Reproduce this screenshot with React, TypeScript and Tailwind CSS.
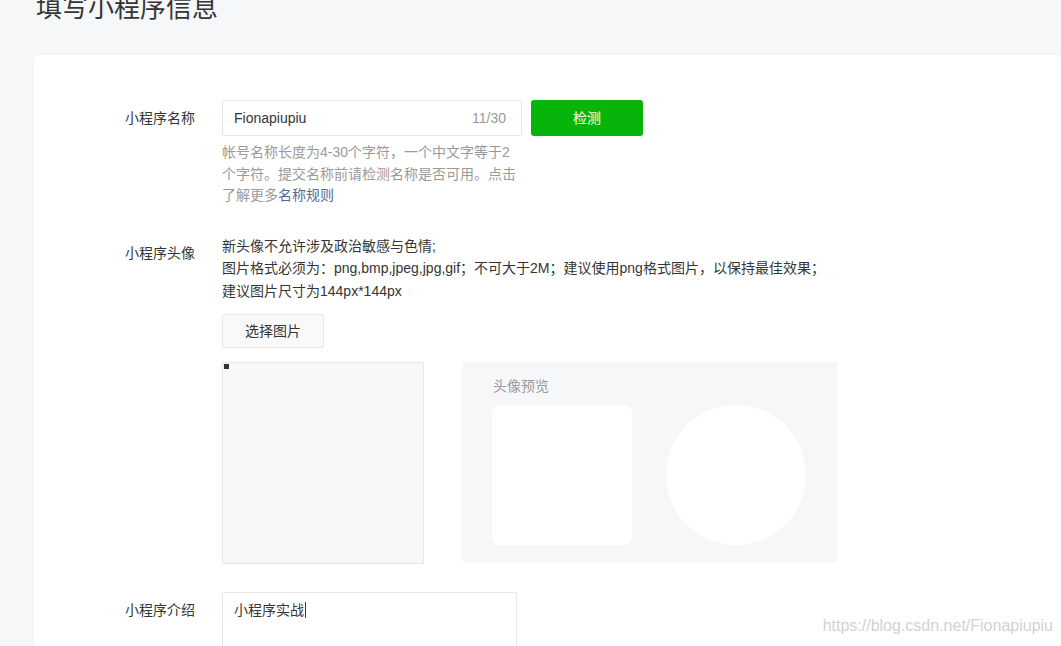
import React from 'react';

const font = { fontFamily: '"Liberation Sans", "Noto Sans CJK SC", sans-serif' };

const Label: React.FC<{ text: string }> = ({ text }) => (
  <div className="w-[97px] shrink-0 text-[14px] leading-[36px] text-[#353535]">{text}</div>
);

const App: React.FC = () => {
  return (
    <div
      className="relative h-[646px] w-[1061px] overflow-hidden bg-[#f6f7f9] antialiased"
      style={font}
    >
      <h1 className="-mt-[5px] ml-[36px] h-[60px] text-[26px] font-normal leading-[26px] text-[#353535]">
        填写小程序信息
      </h1>

      <div className="ml-[34px] h-[620px] rounded-[4px] bg-white pl-[91px] pt-[45px] shadow-[0_0_3px_rgba(0,0,0,0.06)]">
        {/* name */}
        <div className="mb-[28px] flex">
          <Label text="小程序名称" />
          <div>
            <div className="flex gap-[9px]">
              <div className="flex h-[36px] w-[300px] items-center justify-between rounded-[2px] border border-[#e7e7eb] pl-[11px] pr-[15px] text-[14px]">
                <span className="text-[#353535]">Fionapiupiu</span>
                <span className="text-[#9a9a9a]">11/30</span>
              </div>
              <button className="h-[36px] w-[112px] rounded-[3px] bg-[#07b50a] text-[14px] text-white">
                检测
              </button>
            </div>
            <p className="mt-[6px] w-[300px] text-[14px] leading-[21.5px] text-[#9a9a9a]">
              帐号名称长度为4-30个字符，一个中文字等于2个字符。提交名称前请检测名称是否可用。点击了解更多
              <a className="text-[#576b95]" href="#">名称规则</a>
            </p>
          </div>
        </div>

        {/* avatar */}
        <div className="mb-[28px] flex">
          <Label text="小程序头像" />
          <div>
            <div className="text-[14px] leading-[22.5px] text-[#353535]">
              <p>新头像不允许涉及政治敏感与色情;</p>
              <p>图片格式必须为：png,bmp,jpeg,jpg,gif；不可大于2M；建议使用png格式图片，以保持最佳效果；</p>
              <p>建议图片尺寸为144px*144px</p>
            </div>
            <button className="mt-[12px] h-[34px] w-[102px] rounded-[2px] border border-[#e7e7eb] bg-[#f9f9f9] text-[14px] text-[#353535]">
              选择图片
            </button>
            <div className="mt-[14px] flex items-start">
              <div className="h-[202px] w-[202px] border border-[#e4e6ea] bg-[#f6f7f9] p-px">
                <div className="h-[5px] w-[5px] bg-[#333]" />
              </div>
              <div className="ml-[38px] h-[200px] w-[375px] bg-[#f6f7f9] pl-[30px] pt-[14px]">
                <div className="mb-[9px] pl-px text-[14px] leading-[20px] text-[#9a9a9a]">头像预览</div>
                <div className="flex gap-[34px]">
                  <div className="h-[140px] w-[140px] rounded-[8px] bg-white" />
                  <div className="h-[140px] w-[140px] rounded-full bg-white" />
                </div>
              </div>
            </div>
          </div>
        </div>

        {/* intro */}
        <div className="flex">
          <Label text="小程序介绍" />
          <div className="h-[90px] w-[295px] rounded-[2px] border border-[#e7e7eb] px-[11px] pt-[6px] text-[14px] leading-[20px] text-[#353535]">
            小程序实战<span className="ml-px inline-block h-[16px] w-px translate-y-[3px] bg-[#353535]" />
          </div>
        </div>
      </div>

      <div className="absolute bottom-[8px] right-[8px] text-[16px] text-[#d2d2d2]">
        https://blog.csdn.net/Fionapiupiu
      </div>
    </div>
  );
};

export default App;
